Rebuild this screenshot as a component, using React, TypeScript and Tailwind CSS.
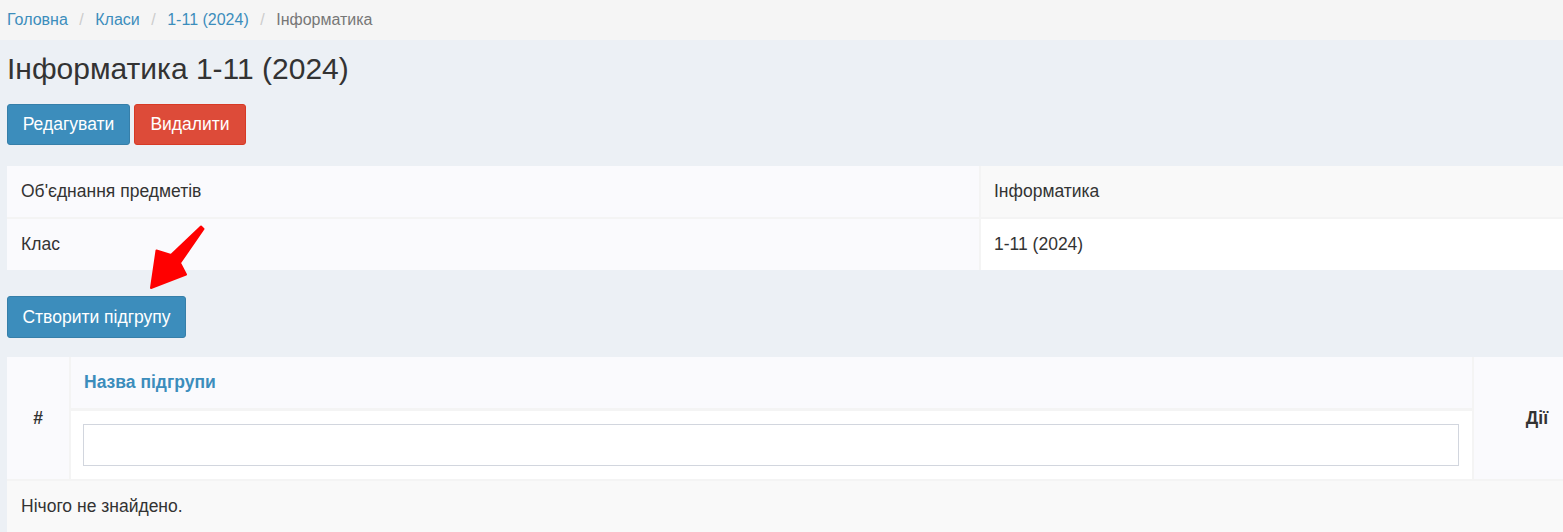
import React from "react";

export default function App() {
  return (
    <div className="relative w-[1563px] h-[532px] overflow-hidden bg-[#ecf0f5] font-['Liberation_Sans',Arial,sans-serif] text-[#333]">
      <div className="w-[1607px]">
        {/* breadcrumb */}
        <div className="h-[40px] bg-[#f5f5f5] flex items-center pl-[7px] text-[16px]">
          <span className="text-[#3c8dbc]">Головна</span>
          <span className="text-[#ccc] px-[11.5px]">/</span>
          <span className="text-[#3c8dbc]">Класи</span>
          <span className="text-[#ccc] px-[11.5px]">/</span>
          <span className="text-[#3c8dbc]">1-11 (2024)</span>
          <span className="text-[#ccc] px-[11.5px]">/</span>
          <span className="text-[#777]">Інформатика</span>
        </div>

        <div className="px-[7px]">
          <h1 className="mt-[11px] h-[36px] leading-[36px] text-[30px] text-[#333]">Інформатика 1-11 (2024)</h1>

          <div className="mt-[17px] flex gap-[4px]">
            <button className="h-[41px] w-[123px] rounded-[3px] border border-[#367fa9] bg-[#3c8dbc] text-white text-[17.5px]">Редагувати</button>
            <button className="h-[41px] w-[112px] rounded-[3px] border border-[#d73925] bg-[#dd4b39] text-white text-[17.5px]">Видалити</button>
          </div>

          {/* detail table */}
          <div className="mt-[21px] grid grid-cols-[972px_1fr] gap-[2px] bg-[#f4f4f4] text-[17.5px]">
            <div className="h-[51px] flex items-center pl-[14px] bg-[#fafafd]">Об'єднання предметів</div>
            <div className="h-[51px] flex items-center pl-[13px] bg-[#f9f9f9]">Інформатика</div>
            <div className="h-[51px] flex items-center pl-[14px] bg-[#fafafd]">Клас</div>
            <div className="h-[51px] flex items-center pl-[13px] bg-white">1-11 (2024)</div>
          </div>

          <button className="mt-[26px] h-[42px] w-[179px] rounded-[3px] border border-[#367fa9] bg-[#3c8dbc] text-white text-[17.5px]">Створити підгрупу</button>

          {/* list table */}
          <div className="mt-[19px] bg-[#f4f4f4] text-[17.5px]">
            <div className="grid grid-cols-[62px_1401px_1fr] gap-x-[2px]">
              <div className="bg-[#fafafd] flex items-center justify-center font-bold">#</div>
              <div className="flex flex-col gap-[3px]">
                <div className="h-[51px] bg-[#fafafd] flex items-center pl-[13px] font-bold text-[#3c8dbc]">Назва підгрупи</div>
                <div className="h-[68px] bg-white flex items-center pl-[12px] pr-[13px]">
                  <div className="h-[42px] w-full border border-[#d2d6de] bg-white"></div>
                </div>
              </div>
              <div className="bg-[#fafafd] flex items-center justify-center font-bold">Дії</div>
            </div>
            <div className="mt-[2px] h-[51px] bg-[#f9f9f9] flex items-center pl-[14px]">Нічого не знайдено.</div>
          </div>
        </div>
      </div>

      {/* red annotation arrow */}
      <svg className="absolute left-[140px] top-[220px] pointer-events-none" width="70" height="75" viewBox="0 0 70 75">
        <polygon
          points="63.5,9 40,43 46,54.5 11,68 16.5,30.5 31,35 61,6.5"
          fill="#ff0000"
          stroke="#ff0000"
          strokeWidth="2"
          strokeLinejoin="round"
        />
      </svg>
    </div>
  );
}
